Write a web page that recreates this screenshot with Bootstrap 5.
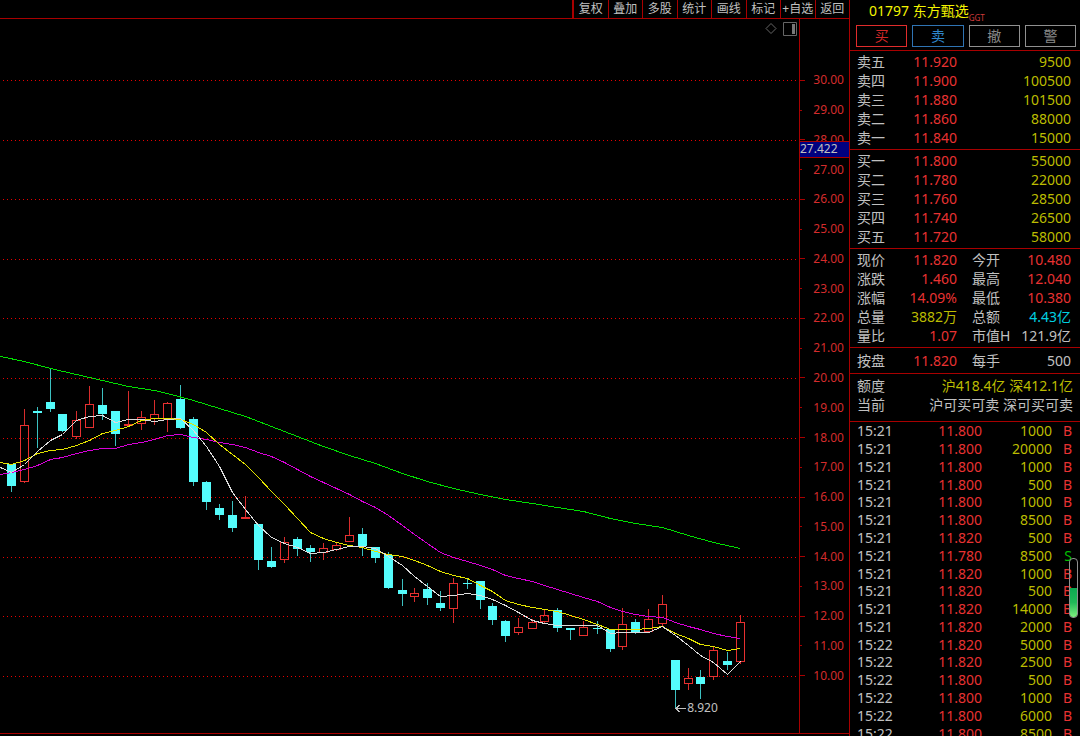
<!DOCTYPE html>
<html lang="zh-CN">
<head>
<meta charset="utf-8">
<meta name="viewport" content="width=device-width, initial-scale=1">
<title>01797 东方甄选</title>
<link href="https://cdn.jsdelivr.net/npm/bootstrap@5.3.0/dist/css/bootstrap.min.css" rel="stylesheet">
<style>
:root{--line:#a80000;--up:#e83232;--vol:#bcbc00;--txt:#c0c0c0}
body{background:#000;color:var(--txt);font:14px/17px "Noto Sans","Noto Sans CJK SC",sans-serif}
button{background:none;border:0;padding:0;color:inherit}
.plot-side{min-width:0}
.toolbar{height:19px;border-bottom:1px solid var(--line)}
.tools{width:277px}
.tools button{flex:1 1 0;min-width:0;height:18px;border-left:1px solid var(--line);font-size:12px;line-height:14px;white-space:nowrap}
.tools button:first-child{border-left-width:2px}
.chart-area{border-bottom:1px solid var(--line);margin-bottom:2px}
.corner{top:3px;right:2px;gap:6px}
.low-mark{left:86%;top:681px;font-size:12px;line-height:16px}
.axis{width:50px;border-left:1px solid var(--line);color:#d42c2c;font-size:12px;line-height:16px}
.axis-label{flex:298 1 0;padding-right:5px;min-height:0}
.axis-label::before{content:"";width:2px;height:1px;background:var(--line);margin-right:auto}
.axis-label.major::before{width:5px}
.pad-top{flex:465 1 0}
.pad-bottom{flex:425 1 0}
.cursor-tag{left:0;right:0;top:122px;height:17px;line-height:14px;background:#000080;color:var(--txt);border:solid var(--line);border-width:1px 0}
.quote{width:231px;border-left:1px solid var(--line)}
.head{height:25px;padding-left:19px;color:#f4f400;line-height:22px}
.ggt{color:#d03a3a;font-size:8px;line-height:8px;margin-top:14px}
.acts{gap:5px;padding:0 4px 3px 6px}
.acts button{flex:1 1 0;height:22px;border:1px solid #909090;color:#888;line-height:18px}
.acts .buy{border-color:#e02c2c;color:#d02828}
.acts .sell{border-color:#2f74b4;color:#2f86cc}
.block{border-top:1px solid var(--line);padding:1px 0 2px}
.block.single{padding:3px 0}
.block.quota{padding:2px 0 7px}
.grid-table{width:100%;table-layout:fixed;border-collapse:collapse}
.grid-table td,.grid-table th{padding:0;font-weight:400;white-space:nowrap}
.block td,.block th{height:19px}
.block th:first-child{width:50px;padding-left:7px}
.block td:nth-child(2){width:57px;text-align:right}
.block th:nth-child(3){width:60px;padding-left:15px}
.block td:last-child{text-align:right;padding-right:9px}
.block.quota td:last-child{width:auto;padding-right:7px}
.tape{border-top:1px solid var(--line)}
.tape table{height:320px}
.tape td{text-align:right;color:var(--up)}
.tape td:nth-child(1){width:46px;text-align:left;padding-left:7px;color:var(--txt)}
.tape td:nth-child(2){width:86px}
.tape td:nth-child(3){width:70px;color:var(--vol)}
.tape td:nth-child(4){padding-right:8px}
.c-up{color:var(--up)}.c-vol{color:var(--vol)}.c-cy{color:#00d0e0}
.tape td.c-sell{color:#00c000}
.gauge{top:136px;right:2px;width:9px;height:60px;border:1px solid #909090;border-radius:4px;overflow:hidden}
.gauge-fill{height:50%;background:linear-gradient(#0ca850,#20b858 50%,#80f080)}
</style>
</head>
<body>
<div class="d-flex vh-100 overflow-hidden">
  <main class="plot-side d-flex flex-column flex-grow-1">
    <nav class="toolbar d-flex justify-content-end flex-shrink-0" aria-label="工具">
      <div class="tools d-flex">
        <button type="button">复权</button><button type="button">叠加</button><button type="button">多股</button><button type="button">统计</button><button type="button">画线</button><button type="button">标记</button><button type="button" class="overflow-hidden">+自选</button><button type="button">返回</button>
      </div>
    </nav>
    <div class="chart-area d-flex flex-grow-1 overflow-hidden">
      <div class="position-relative flex-grow-1 overflow-hidden">
        <svg id="plot" class="d-block w-100 h-100" viewBox="0 19 799 714" preserveAspectRatio="none" fill="none" shape-rendering="crispEdges"></svg>
        <div class="corner position-absolute d-flex">
          <button type="button" class="d-flex" aria-label="标记点"><svg width="12" height="13" fill="none" stroke="#666"><path d="M6 1.500 11 6.500 6 11.500 1 6.500Z"/></svg></button>
          <button type="button" class="d-flex" aria-label="侧栏"><svg width="14" height="14" fill="none"><path d="M.5.5h13v13H.5Z" stroke="#666"/><path d="M9 2h3v10H9Z" fill="#777"/></svg></button>
        </div>
        <span class="low-mark position-absolute">8.920</span>
      </div>
      <div class="axis position-relative d-flex flex-column flex-shrink-0" id="axis">
        <div class="pad-top"></div>
        <div class="pad-bottom order-last"></div>
        <div class="cursor-tag position-absolute">27.422</div>
      </div>
    </div>
  </main>

  <aside class="quote d-flex flex-column flex-shrink-0">
    <div class="head d-flex flex-shrink-0"><span>01797 东方甄选</span><span class="ggt">GGT</span></div>
    <div class="acts d-flex flex-shrink-0">
      <button type="button" class="buy">买</button><button type="button" class="sell">卖</button><button type="button">撤</button><button type="button">警</button>
    </div>
    <div class="block"><table class="grid-table">
      <tr><th>卖五</th><td class="c-up">11.920</td><td class="c-vol">9500</td></tr>
      <tr><th>卖四</th><td class="c-up">11.900</td><td class="c-vol">100500</td></tr>
      <tr><th>卖三</th><td class="c-up">11.880</td><td class="c-vol">101500</td></tr>
      <tr><th>卖二</th><td class="c-up">11.860</td><td class="c-vol">88000</td></tr>
      <tr><th>卖一</th><td class="c-up">11.840</td><td class="c-vol">15000</td></tr>
    </table></div>
    <div class="block"><table class="grid-table">
      <tr><th>买一</th><td class="c-up">11.800</td><td class="c-vol">55000</td></tr>
      <tr><th>买二</th><td class="c-up">11.780</td><td class="c-vol">22000</td></tr>
      <tr><th>买三</th><td class="c-up">11.760</td><td class="c-vol">28500</td></tr>
      <tr><th>买四</th><td class="c-up">11.740</td><td class="c-vol">26500</td></tr>
      <tr><th>买五</th><td class="c-up">11.720</td><td class="c-vol">58000</td></tr>
    </table></div>
    <div class="block"><table class="grid-table">
      <tr><th>现价</th><td class="c-up">11.820</td><th>今开</th><td class="c-up">10.480</td></tr>
      <tr><th>涨跌</th><td class="c-up">1.460</td><th>最高</th><td class="c-up">12.040</td></tr>
      <tr><th>涨幅</th><td class="c-up">14.09%</td><th>最低</th><td class="c-up">10.380</td></tr>
      <tr><th>总量</th><td class="c-vol">3882万</td><th>总额</th><td class="c-cy">4.43亿</td></tr>
      <tr><th>量比</th><td class="c-up">1.07</td><th>市值H</th><td>121.9亿</td></tr>
    </table></div>
    <div class="block single"><table class="grid-table">
      <tr><th>按盘</th><td class="c-up">11.820</td><th>每手</th><td>500</td></tr>
    </table></div>
    <div class="block quota"><table class="grid-table">
      <tr><th>额度</th><td class="c-vol">沪418.4亿 深412.1亿</td></tr>
      <tr><th>当前</th><td>沪可买可卖 深可买可卖</td></tr>
    </table></div>
    <div class="tape position-relative flex-grow-1 overflow-hidden">
      <table class="grid-table">
        <tr><td>15:21</td><td>11.800</td><td>1000</td><td>B</td></tr>
        <tr><td>15:21</td><td>11.800</td><td>20000</td><td>B</td></tr>
        <tr><td>15:21</td><td>11.800</td><td>1000</td><td>B</td></tr>
        <tr><td>15:21</td><td>11.800</td><td>500</td><td>B</td></tr>
        <tr><td>15:21</td><td>11.800</td><td>1000</td><td>B</td></tr>
        <tr><td>15:21</td><td>11.800</td><td>8500</td><td>B</td></tr>
        <tr><td>15:21</td><td>11.820</td><td>500</td><td>B</td></tr>
        <tr><td>15:21</td><td>11.780</td><td>8500</td><td class="c-sell">S</td></tr>
        <tr><td>15:21</td><td>11.820</td><td>1000</td><td>B</td></tr>
        <tr><td>15:21</td><td>11.820</td><td>500</td><td>B</td></tr>
        <tr><td>15:21</td><td>11.820</td><td>14000</td><td>B</td></tr>
        <tr><td>15:21</td><td>11.820</td><td>2000</td><td>B</td></tr>
        <tr><td>15:22</td><td>11.820</td><td>5000</td><td>B</td></tr>
        <tr><td>15:22</td><td>11.820</td><td>2500</td><td>B</td></tr>
        <tr><td>15:22</td><td>11.800</td><td>500</td><td>B</td></tr>
        <tr><td>15:22</td><td>11.800</td><td>1000</td><td>B</td></tr>
        <tr><td>15:22</td><td>11.800</td><td>6000</td><td>B</td></tr>
        <tr><td>15:22</td><td>11.800</td><td>8500</td><td>B</td></tr>
      </table>
      <div class="gauge position-absolute d-flex flex-column justify-content-end"><div class="gauge-fill"></div></div>
    </div>
  </aside>
</div>
<script src="https://cdn.jsdelivr.net/npm/bootstrap@5.3.0/dist/js/bootstrap.bundle.min.js"></script>
<script>
// Price scale labels, 30 down to 10
const axis = document.getElementById('axis');
for (let p = 30; p >= 10; p--) {
  const d = document.createElement('div');
  d.className = 'axis-label d-flex align-items-center' + (p % 2 ? '' : ' major');
  d.textContent = p.toFixed(2);
  axis.append(d);
}
// Candles: centre x, body top, body bottom, high, low, 1 = rising
const candles = [
[11,464,486,464,491,0],[24,425,481,409,482,1],[37,411,413,407,447,0],[50,402,409,369,411,0],[62,414,431,414,431,0],
[76,420,436,411,438,1],[89,404,427,386,427,1],[102,405,414,388,419,0],[115,411,434,411,445,0],[128,424,425,391,425,1],
[141,417,423,411,429,1],[154,414,418,400,424,1],[167,403,419,402,431,1],[180,399,428,385,428,0],[193,419,482,417,485,0],
[206,482,502,481,509,0],[219,508,515,504,519,0],[232,515,528,501,531,0],[245,517,518,496,518,1],[258,524,560,524,569,0],
[271,561,567,547,567,0],[284,542,559,537,562,1],[297,539,549,537,555,0],[310,548,552,545,561,0],[323,548,552,543,559,1],
[336,545,549,542,550,1],[349,535,541,517,541,1],[362,534,546,528,555,0],[375,547,558,547,562,0],[388,555,588,552,588,0],
[402,590,594,579,605,0],[414,593,596,588,601,1],[427,589,598,583,604,0],[440,603,608,591,610,0],[453,583,608,578,622,1],
[467,583,584,579,588,0],[480,581,600,581,608,0],[492,606,620,603,624,0],[505,621,636,620,641,0],[518,627,632,618,634,1],
[532,622,628,619,628,1],[544,615,621,609,622,1],[557,610,628,608,631,0],[570,628,630,628,639,0],[583,627,635,621,635,1],
[597,628,629,621,633,0],[610,629,649,629,651,0],[622,624,646,608,649,1],[635,622,633,619,633,0],[648,619,631,609,632,1],
[662,604,623,595,625,1],[675,660,690,660,708,0],[688,678,683,668,689,1],[700,677,684,670,698,0],[713,650,676,647,679,1],
[727,661,665,652,669,0],[740,622,661,615,663,1]];
const averages = [
['#00e000','0,356 24,361 50,368 76,374 102,380 128,386 154,390 167,393 193,400 219,408 245,416 271,426 297,436 323,446 349,455 375,463 402,473 427,481 453,488 480,494 505,499 532,503 557,507 583,511 610,518 635,523 662,527 688,535 713,542 740,548'],
['#d800d8','0,474 11,472 24,469 37,465 50,459 62,457 76,453 89,450 102,448 115,448 128,444 141,442 154,439 167,435 180,434 193,437 206,439 219,442 232,444 245,447 258,452 271,456 284,462 297,469 310,476 323,482 336,488 349,494 362,501 375,507 388,515 402,525 414,534 427,543 440,552 453,557 467,561 480,565 492,569 505,575 518,578 532,581 544,585 557,589 570,593 583,597 597,601 610,607 622,611 635,614 648,616 662,617 675,622 688,626 700,629 713,633 727,636 740,638'],
['#e4e400','0,462 11,464 24,460 37,453 50,450 62,449 76,445 89,440 102,433 115,430 128,426 141,420 154,418 167,418 180,419 193,424 206,432 219,444 232,454 245,464 258,477 271,491 284,504 297,518 310,532 323,538 336,542 349,545 362,547 375,551 388,554 402,556 414,560 427,565 440,571 453,575 467,578 480,585 492,591 505,600 518,604 532,607 544,609 557,611 570,615 583,619 597,624 610,629 635,629 648,628 662,626 675,633 688,638 700,644 713,646 727,650 740,648'],
['#dcdcdc','0,467 11,472 24,464 37,451 50,440 62,434 76,420 89,416 102,415 115,422 128,419 141,419 154,421 167,419 180,418 193,430 206,446 219,466 232,492 245,509 258,525 271,537 284,543 297,547 310,553 323,552 336,549 349,546 362,546 375,548 388,556 402,565 414,576 427,586 440,596 453,595 467,593 480,595 492,599 505,605 518,612 532,620 544,623 557,625 597,625 610,633 622,632 648,632 662,626 675,635 688,645 700,655 713,662 727,674 740,661']];
let s = '';
for (let i = 0; i < 11; i++) {
  const y = 80.5 + Math.round(i * 59.6);
  s += `<path d="M3 ${y}H799" stroke="#e80000" stroke-dasharray="1 3"/>`;
}
for (const [x, t, b, h, l, up] of candles) {
  const c = up ? '#e83030' : '#54fcfc', m = x + .5;
  s += `<path d="M${m} ${h}V${t}M${m} ${b}V${l + 1}" stroke="${up ? '#d82c2c' : '#3cc0c0'}"/>`;
  s += up ? `<rect x="${x - 3.5}" y="${t + .5}" width="8" height="${b - t}" stroke="${c}"/>`
          : `<rect x="${x - 4}" y="${t}" width="9" height="${b - t}" fill="${c}"/>`;
}
for (const [c, p] of averages) s += `<polyline points="${p}" stroke="${c}" transform="translate(.5 .5)"/>`;
s += '<path d="M676 708.500H686M679.500 705 676 708.500 679.500 712" stroke="#c0c0c0"/>';
document.getElementById('plot').innerHTML = s;
</script>
</body>
</html>
